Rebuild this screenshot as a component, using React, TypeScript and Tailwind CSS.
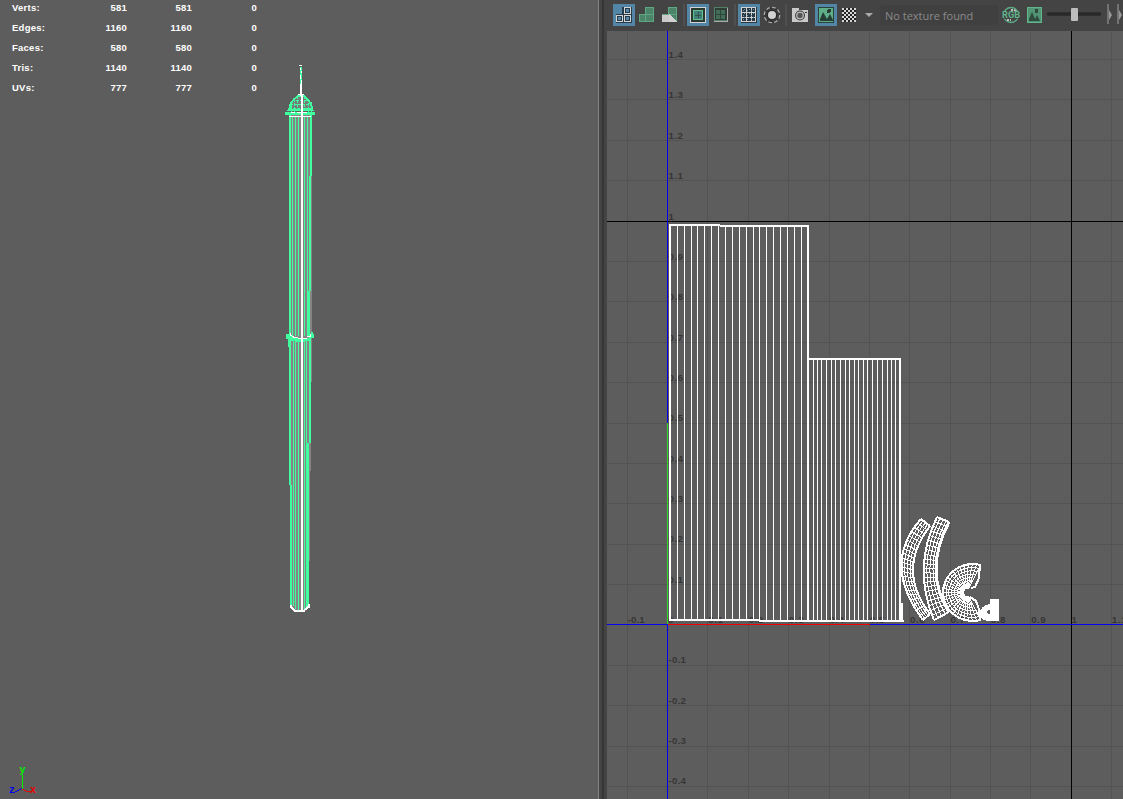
import React from "react";

const gridX = [627, 707, 748, 788, 829, 869, 909, 950, 990, 1030, 1111];
const gridY = [59, 99, 140, 180, 261, 301, 342, 382, 423, 463, 503, 544, 584, 665, 705, 746, 786];

function Icon({ on, children }: { on?: boolean; children: React.ReactNode }) {
  return (
    <span className={on ? "grid h-[22px] w-[22px] shrink-0 place-items-center bg-[#5285a6]" : "grid h-[22px] w-[22px] shrink-0 place-items-center"}>
      <svg width="18" height="18" viewBox="0 0 18 18" shapeRendering="crispEdges">{children}</svg>
    </span>
  );
}

function Separator() {
  return <i className="block h-[22px] w-[2px] shrink-0 bg-[#4f4f4f]" />;
}

function Shell() {
  return (
    <g fill="#4c846a" stroke="#5fa783">
      <rect x="7.5" y="1.5" width="8" height="7" />
      <rect x="1.5" y="8.5" width="6" height="7" />
      <rect x="7.5" y="8.5" width="8" height="7" />
    </g>
  );
}

function Toolbar() {
  return (
    <div className="h-[31px] w-[516px] shrink-0 overflow-hidden bg-[#444444]">
      <div className="flex h-[30px] items-center pl-[6px]">
        <Icon on>
          <path d="M7 1h10v16H1V8h6z" fill="#283b48" />
          <g fill="#5285a6" stroke="#d4d4d4"><rect x="9.500" y="1.500" width="6" height="6" /><rect x="1.500" y="9.500" width="6" height="6" /><rect x="9.500" y="9.500" width="6" height="6" /></g>
          <path d="M8.500 2v14M2 8.500h14" stroke="#283b48" />
          <g fill="none" stroke="#283b48"><rect x="10.500" y="2.500" width="4" height="4" /><rect x="2.500" y="10.500" width="4" height="4" /><rect x="10.500" y="10.500" width="4" height="4" /></g>
        </Icon>
        <span className="ml-[1px]"><Icon><Shell /></Icon></span>
        <span className="ml-[1px]"><Icon><Shell /><path d="M1 9h7v7H1z" fill="#cbcbcb" /><path d="M8 8l8 8H8z" fill="#d2d2d2" /></Icon></span>
        <span className="ml-[2px]"><Separator /></span>
        <span className="ml-[2px]"><Icon on>
          <rect x="1" y="1" width="16" height="16" fill="#29392f" />
          <rect x="1.500" y="1.500" width="15" height="15" fill="#29392f" stroke="#d2d2d2" />
          <rect x="4.500" y="4.500" width="9" height="9" fill="#3f8470" stroke="#62bd91" />
          <path d="M6 6.500h6M6 11.500h6" stroke="#4b6fa0" strokeDasharray="2 2" /><path d="M9 6v6M6 9h6" stroke="#31534a" />
        </Icon></span>
        <span className="ml-[1px]"><Icon>
          <rect x="2.500" y="1.500" width="13" height="13" fill="#303c36" stroke="#508068" /><path d="M2 15.500h13.500V2" fill="none" stroke="#a9a9a9" /><rect x="4" y="4" width="9" height="9" fill="#426d58" /><path d="M8.500 3v10M4 8.500h9" stroke="#30443a" />
        </Icon></span>
        <span className="ml-[2px]"><Separator /></span>
        <span className="ml-[2px]"><Icon on>
          <rect x="1" y="1" width="16" height="16" fill="#293842" /><g stroke="#d1d1d1" fill="none"><rect x="1.500" y="1.500" width="14" height="14" /><path d="M6.500 1v15M11.500 1v15M1 6.500h15M1 11.500h15" /></g>
          <path d="M3 4.500h12M3 9h12M3 13.500h12M4.500 3v12M9 3v12M13.500 3v12" stroke="#6794b0" strokeDasharray="1 3" />
        </Icon></span>
        <span className="ml-[1px]"><Icon>
          <circle cx="9" cy="9" r="7.700" fill="#303030" stroke="#a9a9a9" strokeWidth="1.300" strokeDasharray="3.8 2.2" shapeRendering="auto" /><circle cx="9" cy="9" r="6.500" fill="#444" shapeRendering="auto" /><circle cx="9" cy="9" r="5.500" fill="#292929" shapeRendering="auto" /><circle cx="9" cy="9" r="4" fill="#d1d1d1" shapeRendering="auto" />
        </Icon></span>
        <span className="ml-[2px]"><Separator /></span>
        <span className="ml-[2px]"><Icon>
          <path d="M1 2h7v2h9v12H1z" fill="#c9c9c9" /><circle cx="9" cy="9.500" r="4.900" fill="#303030" shapeRendering="auto" /><circle cx="9" cy="9.500" r="3.300" fill="#555" stroke="#c4c4c4" strokeWidth="1.200" shapeRendering="auto" /><path d="M14 6h2" stroke="#333" />
        </Icon></span>
        <span className="ml-[4px]"><Icon on>
          <rect x="1" y="1" width="16" height="16" fill="#294239" /><rect x="2" y="2" width="14" height="14" fill="#5fae88" /><path d="M3 15v-2l3-7 4 7 3-5 3 6v1z" fill="#263e36" shapeRendering="auto" /><circle cx="12" cy="5" r="2" fill="#263e36" />
        </Icon></span>
        <span className="ml-[1px]"><Icon>
          <rect x="2" y="2" width="14" height="14" fill="#242424" />
          {Array.from({ length: 25 }, (_, i) => i * 2).map((i) => <rect key={i} x={2 + (i % 7) * 2} y={2 + Math.floor(i / 7) * 2} width="2" height="2" fill="#d5d5d5" />)}
        </Icon></span>
        <span className="ml-[5px]"><svg width="8" height="5"><path d="M0 0h8L4 4z" fill="#aaaaaa" /></svg></span>
        <div className="ml-[7px] h-5 w-[118px] shrink-0 rounded-[2px] bg-[#404040] pl-[5px] pt-[1px] font-['Open_Sans',sans-serif] text-[11px] leading-5 text-[#8a8a8a]">No texture found</div>
        <svg className="ml-[3px] shrink-0" width="20" height="20" viewBox="0 0 20 20">
          <circle cx="10" cy="10" r="7.500" fill="none" stroke="#5bac84" strokeWidth="1.300" /><path d="M10 5h3l2 1M6 15h4" stroke="#c0c0c0" strokeWidth="2" strokeDasharray="2 1" fill="none" /><rect x="1" y="6.500" width="18" height="7" fill="#3f4341" /><text x="10" y="13" textAnchor="middle" textLength="18" lengthAdjust="spacingAndGlyphs" fontFamily="Roboto, sans-serif" fontSize="8.500" fontWeight="700" fill="#62b48c">RGB</text>
        </svg>
        <svg className="ml-[6px] shrink-0" width="15" height="16" viewBox="0 0 15 16" shapeRendering="crispEdges">
          <rect x=".5" y=".5" width="14" height="15" fill="#519575" stroke="#62b48c" /><path d="M2 14v-2l3-7 3 7 2-4 3 6z" fill="#2e4b3d" shapeRendering="auto" /><circle cx="9.500" cy="4" r="2" fill="#2e4b3d" />
        </svg>
        <svg className="ml-[4px] shrink-0" width="56" height="22"><path d="M2.500 10h51" stroke="#292929" strokeWidth="3.500" strokeLinecap="round" /><rect x="25" y="4" width="7" height="13" rx="1" fill="#bdbdbd" /></svg>
        <svg className="ml-[5px] shrink-0" width="16" height="22"><path d="M1 0v20M11 0v20" stroke="#a1a1a1" /><path d="M2 6l3 5-3 5zM12 6l3 5-3 5z" fill="#999999" /></svg>
      </div>
    </div>
  );
}

type Point = [number, number];
function curve(p: Point[], t: number): Point {
  const s = 1 - t;
  return [s * s * p[0][0] + 2 * s * t * p[1][0] + t * t * p[2][0], s * s * p[0][1] + 2 * s * t * p[1][1] + t * t * p[2][1]];
}

function CurvedShell({ left, right, heavy = 0 }: { left: Point[]; right: Point[]; heavy?: number }) {
  const rails = Array.from({ length: 5 }, (_, i) => left.map((p, k) => [p[0] + (right[k][0] - p[0]) * i / 4, p[1] + (right[k][1] - p[1]) * i / 4] as Point));
  return (
    <g fill="none" stroke="#fff">
      {rails.map((p, i) => <path key={i} d={`M${p[0]} Q${p[1]} ${p[2]}`} strokeWidth={i === 4 && heavy ? heavy : i === 0 || i === 4 ? 2 : 1} />)}
      {Array.from({ length: 23 }, (_, i) => {
        const a = curve(left, i / 22), b = curve(right, i / 22);
        return <path key={i} d={`M${a}L${b}`} strokeWidth={i === 0 || i === 22 ? 2 : 1} />;
      })}
    </g>
  );
}

function Fan() {
  const rim = (t: number, s: number): Point => {
    const r = t * Math.PI / 180;
    const inner: Point = [968 + 5 * Math.cos(r), 592.5 + 5 * Math.sin(r)];
    const outer: Point = [973 + 30 * Math.cos(r), 592.5 + 28.500 * Math.sin(r)];
    return [inner[0] + (outer[0] - inner[0]) * s, inner[1] + (outer[1] - inner[1]) * s];
  };
  const angles = Array.from({ length: 27 }, (_, i) => 75 + i * 210 / 26);
  return (
    <g fill="none" stroke="#fff">
      {[0, .14, .28, .42, .57, .71, .85, 1].map((s) => <path key={s} d={`M${angles.map((a) => rim(a, s).join(" ")).join("L")}`} strokeWidth={s === 0 || s === 1 ? 2 : 1} />)}
      {angles.map((a) => <path key={a} d={`M${rim(a, 0)}L${rim(a, 1)}`} />)}
      <path d="M971 588l4-1 4-9 1-14M970 597l6 4 3 8 1 11" strokeWidth="2" />
    </g>
  );
}

function UvCanvas() {
  return (
    <svg width="516" height="768" viewBox="607 31 516 768" className="block shrink-0 bg-[#5d5d5d]" shapeRendering="crispEdges">
      <g stroke="#535353">
        {gridX.map((x) => <path key={x} d={`M${x + .5} 31v768`} />)}
        {gridY.map((y) => <path key={y} d={`M607 ${y + .5}h516`} />)}
      </g>
      <g fill="#363636" fontFamily="Liberation Sans, Arial, sans-serif" fontSize="9.7" fontWeight="700">
        {[1.4, 1.3, 1.2, 1.1, 1, .9, .8, .7, .6, .5, .4, .3, .2, .1, -.1, -.2, -.3, -.4].map((n) => <text key={n} x="668.500" y={623 - n * 403.500} textLength={n < 0 ? 17.5 : n === 1 ? 4.5 : 14.5}>{n}</text>)}
        {[-.1, 0, .1, .2, .3, .4, .5, .6, .7, .8, .9, 1, 1.1].map((n) => <text key={n} x={668 + n * 403.500} y="622.500" textLength={n < 0 ? 17 : n === 0 || n === 1 ? 4.500 : 14.5}>{n}</text>)}
      </g>
      <path d="M607 221.500h516M1071.500 31v768" stroke="#000" />
      <path d="M667.500 31v768M607 624.500h516" stroke="#0000ef" />
      <path d="M667.500 423v201" stroke="#2ddd25" />
      <path d="M668 624.500h202" stroke="#f40000" />
      <g stroke="#fff">
        {[677, 684, 691, 697, 704, 711, 718, 725, 732, 739, 746, 753, 759, 766, 773, 780, 787, 794, 801].map((x) => <path key={x} d={`M${x + .5} 226v395`} />)}
        {[813, 817, 821, 826, 831, 835, 840, 845, 849, 854, 858, 863, 867, 872, 877, 882, 887, 891, 895].map((x) => <path key={x} d={`M${x + .5} 359v262`} />)}
        <path d="M670 225V620M808 225v396M900 358v263" strokeWidth="2" />
        <path d="M669 225h51M720 226h89M808 359h93M669 620h91M759 621h145" strokeWidth="2" />
        <path d="M902 603v18" strokeWidth="2" />
      </g>
      <CurvedShell left={[[921, 519], [881, 564], [923, 620]]} right={[[930, 526], [896, 570], [930, 614]]} />
      <CurvedShell left={[[937, 517], [912, 568], [934, 620]]} right={[[949, 522], [923, 571], [949, 612]]} heavy={3} />
      <Fan />
      <path d="M990 599h9v22h-12c-10-2-10-15 3-17zM988 610l-2 2 2 2h2v-4z" fill="#fff" fillRule="evenodd" />
    </svg>
  );
}

function ModelViewport() {
  const stats = [["Verts:", 581], ["Edges:", 1160], ["Faces:", 580], ["Tris:", 1140], ["UVs:", 777]];
  return (
    <section className="relative h-full w-[598px] shrink-0 overflow-hidden bg-[#5d5d5d]">
      <div className="flex flex-col pl-3 font-['Liberation_Sans',Arial,sans-serif] text-[9.5px] font-bold leading-5 tracking-[0.25px] text-white">
        {stats.map(([label, value], i) => (
          <div key={label} className={i === 0 ? "-mt-[2px] grid h-5 w-[245px] grid-cols-[50px_65px_65px_65px]" : "grid h-5 w-[245px] grid-cols-[50px_65px_65px_65px]"}>
            <span>{label}</span><span className="text-right">{value}</span><span className="text-right">{value}</span><span className="text-right">0</span>
          </div>
        ))}
      </div>
      <svg className="absolute left-[280px] top-[60px]" width="42" height="560" viewBox="280 60 42 560" shapeRendering="crispEdges">
        <path d="M290 115h22v223l-3 269-3 4h-12l-4-4z" fill="#858585" />
        <g stroke="#40ff9f" fill="none">
          <path d="M290 115v223M311 115v61M310 176v115M309 291v45" strokeWidth="2" />
          <path d="M292.500 116v220M295.500 116v220M298.500 116v220M304.500 116v220M307.500 116v220" />
          <path d="M290 339v146M291 485v121M310 339v22M310 361v82M308 443v164" strokeWidth="2" />
          <path d="M288.500 339v8M293.500 339v267M295.500 339v270M298.500 339v271M304.500 339v271M306.500 339v269" />
          <path d="M301 67v29" strokeWidth="2" />
        </g>
        <path d="M289 110c1-8 5-11 9-14h6c4 3 8 7 8 14z" fill="#757b78" stroke="#40ff9f" strokeWidth="2" />
        <path d="M292 100h18M290 104h22M289 108h24M294 99v14M297 96v17M304 96v17M308 99v14M311 102v11M291 105v8" stroke="#40ff9f" fill="none" strokeDasharray="3 1" />
        <path d="M285 113.500h30" stroke="#40ff9f" strokeWidth="3" /><path d="M287 110.500h3M312 110.500h2" stroke="#40ff9f" />
        <path d="M286 334h3v-2h2v4l3 2h14l3-2v-4h2v2h1v4h-3l-2 3h-5v1h-9v-1h-4l-2-2h-3z" fill="#40ff9f" />
        <g stroke="#fff" fill="none">
          <path d="M302 94V340" strokeWidth="2" /><path d="M301.500 340V610" strokeWidth="2" /><path d="M300.500 84v12M300.500 68v2M300.500 75v4" strokeWidth="1" /><path d="M301.500 80v14M301.500 71v2" /><path d="M299 65.500h3" />
          <path d="M289 116.500h22M298 94.500h6" /><path d="M290.500 333v2l3 2h4M298 338.500h9M307 336.500h3v-3" />
          <path d="M290.500 605v2l4 3M308.500 604v3l-4 3" strokeWidth="2" /><path d="M294 611h11" strokeWidth="2" />
          <path d="M291 112.500h17" strokeDasharray="4 2" />
        </g>
      </svg>
      <svg className="absolute bottom-0 left-0" width="50" height="40" viewBox="0 759 50 40" shapeRendering="crispEdges">
        <path d="M22.500 775v14" stroke="#00ef00" /><path d="M22 789l4 2h5" stroke="#f00000" fill="none" /><path d="M22 788.500l-4 2-4 2h-2" stroke="#0000f0" fill="none" />
        <g fontFamily="Liberation Mono, monospace" fontWeight="700" fontSize="10"><text x="19.500" y="773" fill="#00ef00">y</text><text x="30" y="792.500" fill="#f00000">x</text><text x="9" y="792.500" fill="#0000f0">z</text></g>
      </svg>
    </section>
  );
}

export default function App() {
  return (
    <main className="flex h-[799px] w-[1123px] overflow-hidden bg-[#444444]">
      <ModelViewport />
      <div className="flex w-[9px] shrink-0"><i className="w-px bg-[#858585]" /><i className="w-[3px] bg-[#444444]" /><i className="w-[2px] bg-[#353535]" /><i className="w-[3px] bg-[#444444]" /></div>
      <section className="flex w-[516px] shrink-0 flex-col">
        <Toolbar />
        <UvCanvas />
      </section>
    </main>
  );
}
